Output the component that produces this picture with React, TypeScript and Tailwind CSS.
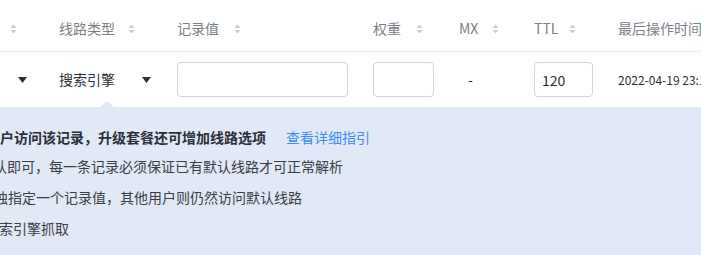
const font = { fontFamily: '"Noto Sans CJK SC", "Noto Sans", sans-serif' };

function SortIcon() {
  return (
    <svg width="7" height="10" viewBox="0 0 7 10" className="shrink-0">
      <path d="M3.5 0.5 L6.5 4 H0.5 Z" fill="#c5ccda" />
      <path d="M3.5 9.5 L6.5 6 H0.5 Z" fill="#c5ccda" />
    </svg>
  );
}

function Caret() {
  return (
    <svg width="9" height="6" viewBox="0 0 9 6" className="shrink-0">
      <path d="M0 0 H9 L4.5 6 Z" fill="#2b2f3a" />
    </svg>
  );
}

function HeadCell({ label, w, gap }: { label?: string; w: string; gap: string }) {
  return (
    <div className={`flex items-center ${w} ${gap} shrink-0`}>
      {label && <span>{label}</span>}
      <SortIcon />
    </div>
  );
}

export default function App() {
  return (
    <div className="w-[701px] h-[255px] overflow-hidden bg-white" style={font}>
      {/* header */}
      <div className="flex items-center h-[52px] pt-[6px] border-b border-[#e6e9ef] text-[14px] text-[#7b7f87]">
        <div className="w-[59px] shrink-0 pl-[10px]">
          <SortIcon />
        </div>
        <HeadCell label="线路类型" w="w-[118px]" gap="gap-[13px]" />
        <HeadCell label="记录值" w="w-[196px]" gap="gap-[15px]" />
        <HeadCell label="权重" w="w-[86px]" gap="gap-[15px]" />
        <HeadCell label="MX" w="w-[75px]" gap="gap-[14px]" />
        <HeadCell label="TTL" w="w-[84px]" gap="gap-[11px]" />
        <div className="shrink-0 whitespace-nowrap">最后操作时间</div>
      </div>

      {/* row */}
      <div className="flex items-center h-[55px] text-[14px] text-[#2b2f3a]">
        <div className="w-[59px] shrink-0 pl-[18px]">
          <Caret />
        </div>
        <div className="w-[118px] shrink-0 flex items-center">
          <span>搜索引擎</span>
          <span className="ml-[27px]">
            <Caret />
          </span>
        </div>
        <div className="w-[196px] shrink-0">
          <input className="w-[171px] h-[35px] border border-[#cfd4de] rounded-[4px] outline-none px-2" />
        </div>
        <div className="w-[86px] shrink-0">
          <input className="w-[61px] h-[35px] border border-[#cfd4de] rounded-[4px] outline-none px-2" />
        </div>
        <div className="w-[75px] shrink-0 pl-[9px]">-</div>
        <div className="w-[84px] shrink-0">
          <input
            defaultValue="120"
            className="w-[59px] h-[35px] border border-[#cfd4de] rounded-[4px] outline-none px-[7px] text-[14px] text-[#2b2f3a]"
          />
        </div>
        <div className="shrink-0 whitespace-nowrap text-[12px] text-[#2b2f3a]">2022-04-19 23:16:05</div>
      </div>

      {/* tip panel */}
      <div className="relative bg-[#e1e8f6] h-[148px] pt-[16px] text-[14px] text-[#3a3e47] whitespace-nowrap">
        <div className="absolute -top-[6px] left-[100px] w-0 h-0 border-l-[7px] border-r-[7px] border-b-[6px] border-l-transparent border-r-transparent border-b-[#e1e8f6]" />
        <div className="leading-[28px] flex">
          <span className="font-bold text-[#2b2f3a]">户访问该记录，升级套餐还可增加线路选项</span>
          <a className="ml-[20px] text-[#3b8cf5] cursor-pointer">查看详细指引</a>
        </div>
        <div className="leading-[31px] -ml-[7px]">认即可，每一条记录必须保证已有默认线路才可正常解析</div>
        <div className="leading-[31px] -ml-[6px]">独指定一个记录值，其他用户则仍然访问默认线路</div>
        <div className="leading-[31px] -ml-[1px]">索引擎抓取</div>
      </div>
    </div>
  );
}
